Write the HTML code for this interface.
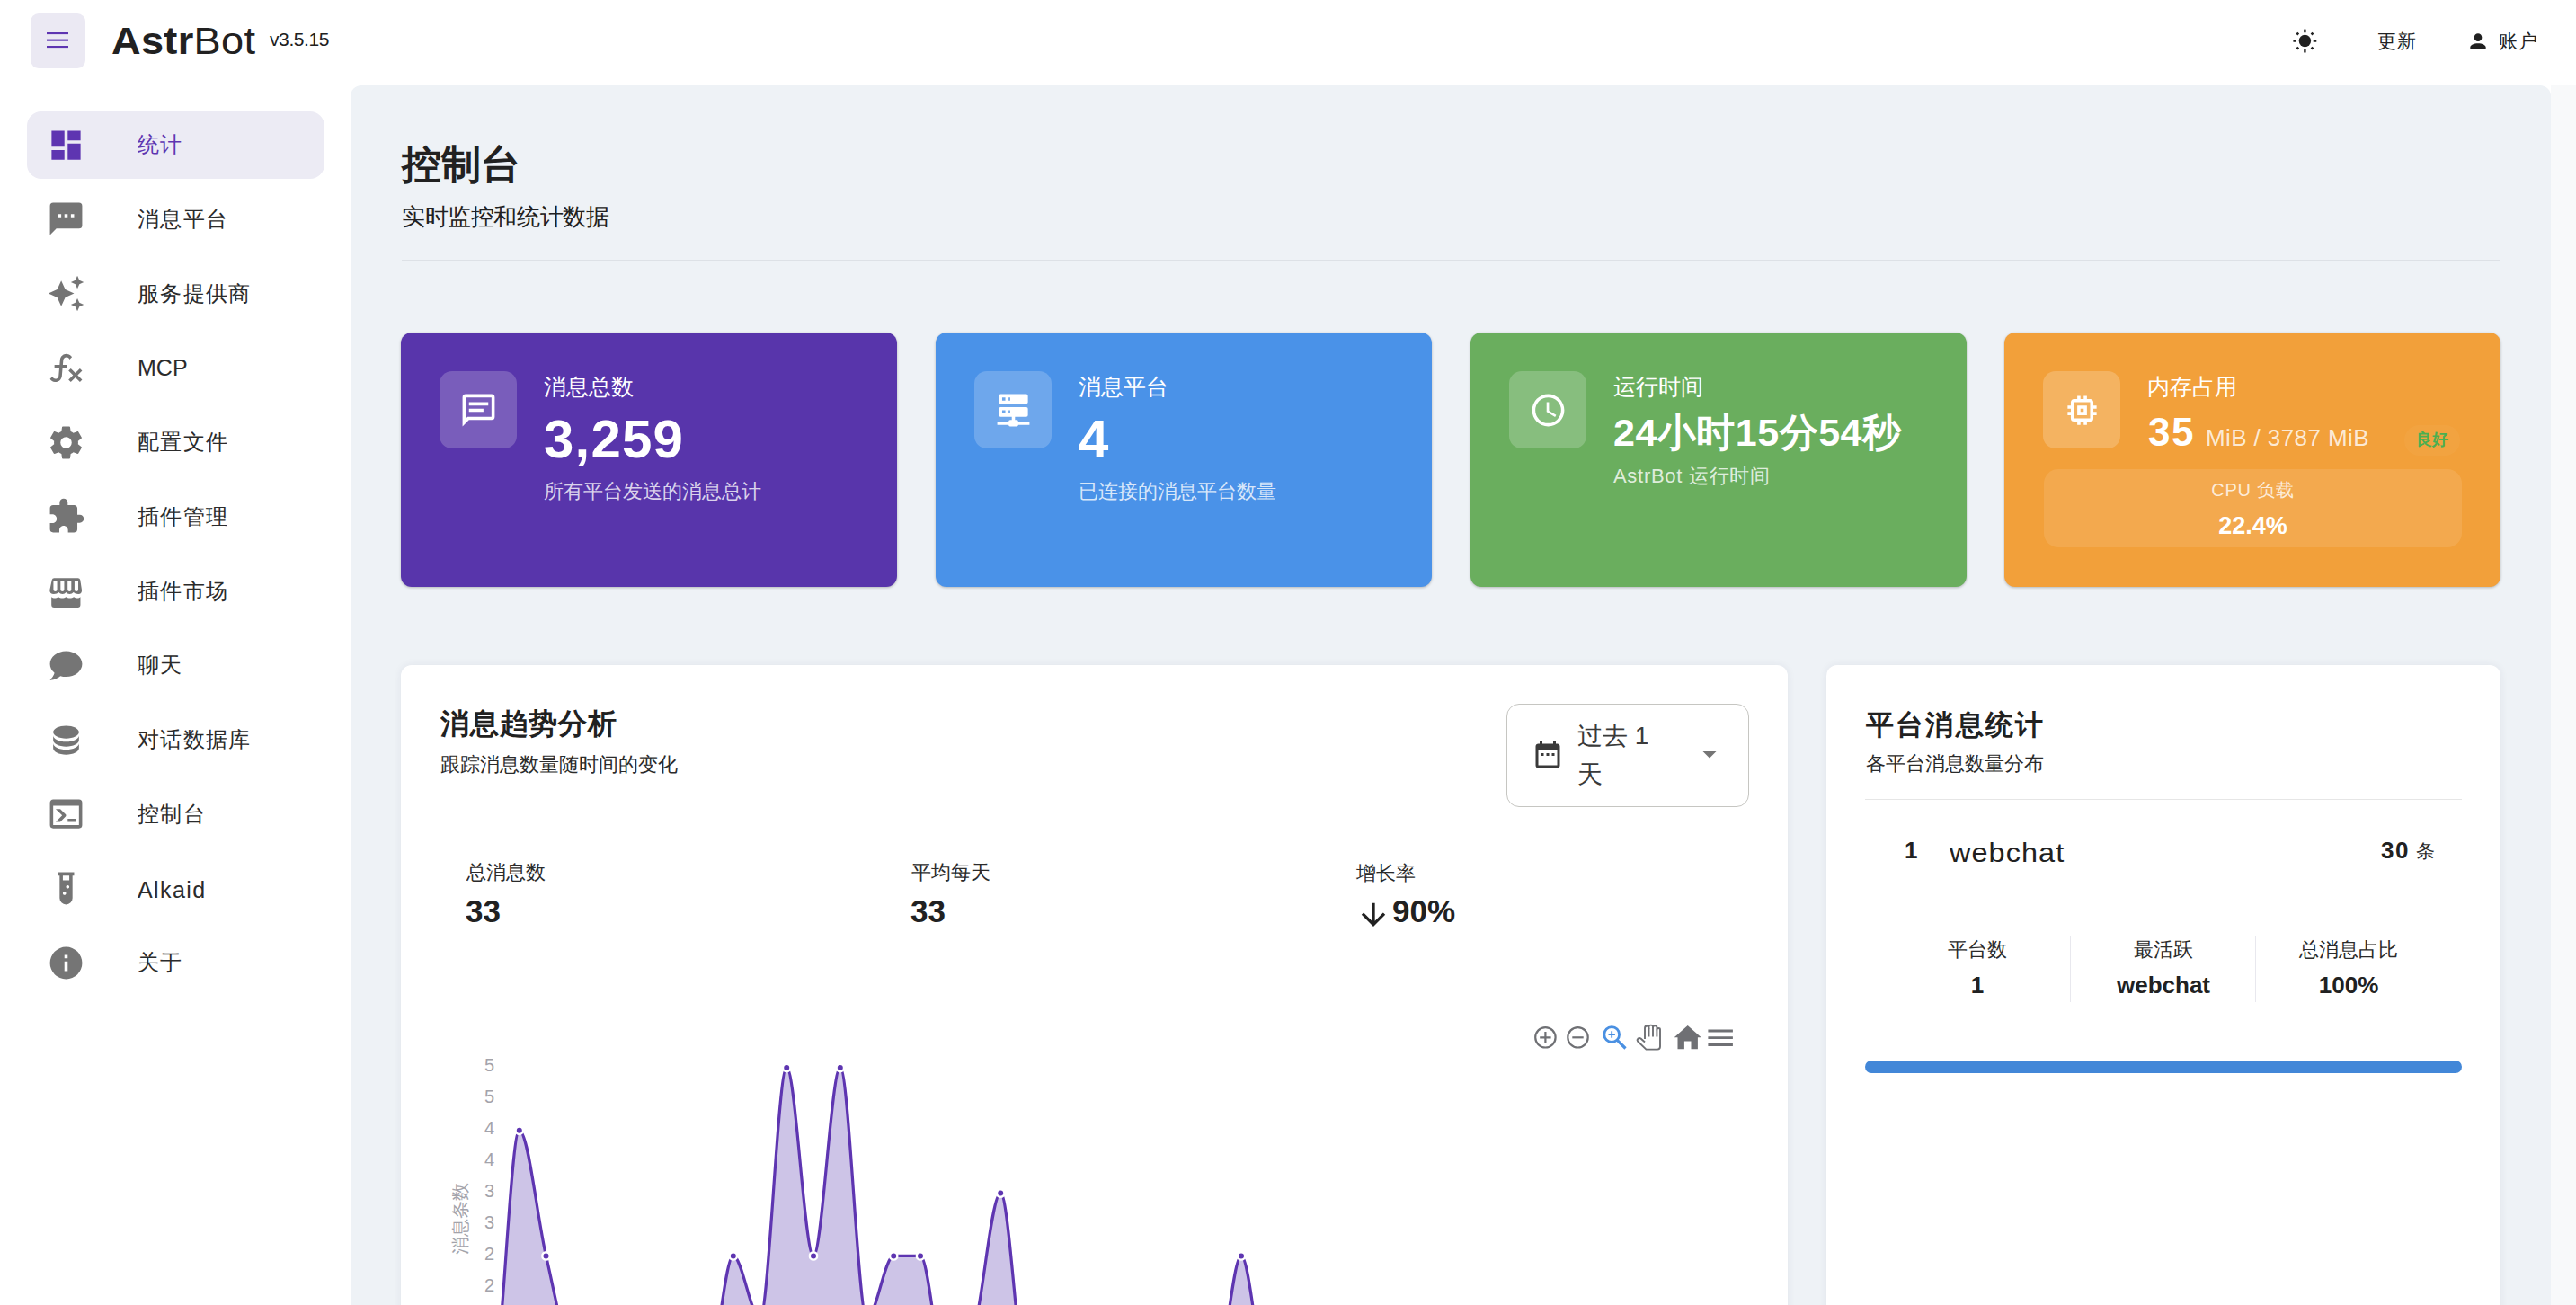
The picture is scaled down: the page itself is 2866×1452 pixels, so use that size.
<!DOCTYPE html>
<html><head><meta charset="utf-8">
<style>
*{margin:0;padding:0;box-sizing:border-box}
html,body{width:2866px;height:1452px;overflow:hidden;background:#fff;font-family:"Liberation Sans",sans-serif;color:#212121}
.a{position:absolute;white-space:nowrap;line-height:1}
svg{position:absolute;overflow:visible}
#hdr{position:absolute;left:0;top:0;width:2866px;height:95px;background:#fff}
#menubtn{position:absolute;left:34px;top:15px;width:61px;height:61px;border-radius:9px;background:#ebe9f3}
#main{position:absolute;left:390px;top:95px;width:2448px;height:1400px;background:#eef2f6;border-radius:12px 12px 0 0}
#strip{position:absolute;left:2838px;top:95px;width:28px;height:1357px;background:#f8f9fa}
.nav{position:absolute;left:30px;width:331px;height:75px;border-radius:16px}
.nav.act{background:#ecebf4}
.ni{position:absolute;left:52px;width:43px;height:43px}
.nt{position:absolute;left:123px;font-size:25px;color:#2b2b2b}
.card{position:absolute;top:370px;width:552px;height:283px;border-radius:12px;box-shadow:0 1px 3px rgba(0,0,0,.25)}
.ib{position:absolute;left:43px;top:43px;width:86px;height:86px;border-radius:14px;background:rgba(255,255,255,.2)}
.ct{position:absolute;left:159px;top:44px;font-size:25px;color:#fff;font-weight:500}
.panel{position:absolute;top:740px;height:800px;background:#fff;border-radius:12px;box-shadow:0 0 10px rgba(40,40,80,.07)}
</style></head><body>
<div id="hdr">
  <div id="menubtn"></div>
  <svg style="left:52px;top:36px" width="24" height="18" viewBox="0 0 24 18"><rect x="0" y="0" width="24" height="2.1" fill="#5e35b1"/><rect x="0" y="7.6" width="24" height="2.1" fill="#5e35b1"/><rect x="0" y="15" width="24" height="2.1" fill="#5e35b1"/></svg>
  <div class="a" style="left:124px;top:24px;font-size:43px;letter-spacing:.3px;transform:scaleX(1.05);transform-origin:0 0;color:#212121"><b>Astr</b>Bot</div>
  <div class="a" style="left:300px;top:33px;font-size:21px;letter-spacing:-.4px;color:#212121">v3.5.15</div>
  <svg style="left:2540px;top:20px" width="50" height="50" viewBox="0 0 50 50"><g fill="#212121"><circle cx="24.4" cy="25.5" r="6.7"/><rect x="23.2" y="12.6" width="2.4" height="3.6" rx=".5"/><rect x="23.2" y="34.9" width="2.4" height="3.6" rx=".5"/><rect x="11.4" y="24.3" width="3.6" height="2.4" rx=".5"/><rect x="33.7" y="24.3" width="3.6" height="2.4" rx=".5"/><rect x="15" y="16.3" width="2.6" height="2.6" transform="rotate(45 16.3 17.6)"/><rect x="31.2" y="16.3" width="2.6" height="2.6" transform="rotate(45 32.5 17.6)"/><rect x="15" y="32.3" width="2.6" height="2.6" transform="rotate(45 16.3 33.6)"/><rect x="31.2" y="32.3" width="2.6" height="2.6" transform="rotate(45 32.5 33.6)"/></g></svg>
  <div class="a" style="left:2645px;top:35px;font-size:21px;letter-spacing:.5px;color:#212121">更新</div>
  <svg style="left:2744px;top:33px" width="26" height="26" viewBox="0 0 24 24"><path fill="#212121" d="M12,4A4,4 0 0,1 16,8A4,4 0 0,1 12,12A4,4 0 0,1 8,8A4,4 0 0,1 12,4M12,14C16.42,14 20,15.79 20,18V20H4V18C4,15.79 7.58,14 12,14Z"/></svg>
  <div class="a" style="left:2780px;top:35px;font-size:21px;letter-spacing:.5px;color:#212121">账户</div>
</div>
<div id="side"><div class="nav act" style="top:123.5px"><svg style="left:22px;top:16px" width="43" height="43" viewBox="0 0 24 24"><path fill="#5e35b1" fill-rule="evenodd" d="M13,3V9H21V3M13,21H21V11H13M3,21H11V15H3M3,13H11V3H3V13Z"/></svg><div class="a" style="left:123px;top:25.5px;font-size:24px;letter-spacing:1.3px;color:#5e35b1">统计</div></div><div class="nav" style="top:206.2px"><svg style="left:22px;top:16px" width="43" height="43" viewBox="0 0 24 24"><path fill="#757575" fill-rule="evenodd" d="M20,2H4A2,2 0 0,0 2,4V22L6,18H20A2,2 0 0,0 22,16V4A2,2 0 0,0 20,2M17,11H15V9H17M13,11H11V9H13M9,11H7V9H9"/></svg><div class="a" style="left:123px;top:25.5px;font-size:24px;letter-spacing:1.3px;color:#2b2b2b">消息平台</div></div><div class="nav" style="top:289.0px"><svg style="left:22px;top:16px" width="43" height="43" viewBox="0 0 24 24"><path fill="#757575" fill-rule="evenodd" d="M19,1L17.74,3.75L15,5L17.74,6.26L19,9L20.25,6.26L23,5L20.25,3.75M9,4L6.5,9.5L1,12L6.5,14.5L9,20L11.5,14.5L17,12L11.5,9.5M19,15L17.74,17.74L15,19L17.74,20.25L19,23L20.25,20.25L23,19L20.25,17.74"/></svg><div class="a" style="left:123px;top:25.5px;font-size:24px;letter-spacing:1.3px;color:#2b2b2b">服务提供商</div></div><div class="nav" style="top:371.8px"><svg style="left:22px;top:16px" width="43" height="43" viewBox="0 0 24 24"><path fill="#757575" fill-rule="evenodd" d="M12.42,5.29C11.32,5.19 10.35,6 10.25,7.11L10,10H12.82V12H9.82L9.38,17.07C9.18,19.27 7.24,20.9 5.04,20.7C3.79,20.59 2.66,19.9 2,18.83L3.5,17.33C3.83,18.38 4.960,18.97 6,18.63C6.78,18.39 7.33,17.7 7.4,16.89L7.82,12H4.82V10H8L8.27,6.93C8.46,4.73 10.39,3.1 12.6,3.28C13.86,3.39 15,4.08 15.66,5.15L14.16,6.65C13.91,5.9 13.23,5.36 12.42,5.29M22,13.65L20.59,12.24L17.76,15.07L14.93,12.24L13.5,13.65L16.35,16.5L13.5,19.31L14.93,20.72L17.76,17.89L20.59,20.72L22,19.31L19.17,16.5L22,13.65Z"/></svg><div class="a" style="left:123px;top:25px;font-size:25px;color:#2b2b2b">MCP</div></div><div class="nav" style="top:454.5px"><svg style="left:22px;top:16px" width="43" height="43" viewBox="0 0 24 24"><path fill="#757575" fill-rule="evenodd" d="M12,15.5A3.5,3.5 0 0,1 8.5,12A3.5,3.5 0 0,1 12,8.5A3.5,3.5 0 0,1 15.5,12A3.5,3.5 0 0,1 12,15.5M19.43,12.97C19.47,12.65 19.5,12.33 19.5,12C19.5,11.67 19.47,11.34 19.43,11L21.54,9.37C21.73,9.22 21.78,8.95 21.66,8.73L19.66,5.27C19.54,5.05 19.27,4.96 19.05,5.05L16.56,6.05C16.04,5.66 15.5,5.32 14.87,5.07L14.5,2.42C14.46,2.180 14.25,2 14,2H10C9.75,2 9.54,2.18 9.5,2.42L9.13,5.07C8.5,5.32 7.96,5.66 7.44,6.05L4.95,5.05C4.73,4.96 4.46,5.05 4.34,5.27L2.34,8.73C2.21,8.95 2.27,9.22 2.46,9.37L4.57,11C4.53,11.34 4.5,11.67 4.5,12C4.5,12.33 4.53,12.65 4.57,12.97L2.46,14.63C2.27,14.78 2.21,15.05 2.34,15.27L4.34,18.73C4.46,18.95 4.73,19.03 4.95,18.95L7.44,17.94C7.96,18.34 8.5,18.68 9.13,18.93L9.5,21.58C9.54,21.82 9.75,22 10,22H14C14.25,22 14.46,21.82 14.5,21.58L14.87,18.93C15.5,18.67 16.04,18.34 16.56,17.94L19.05,18.95C19.27,19.03 19.54,18.95 19.66,18.73L21.66,15.27C21.78,15.05 21.73,14.78 21.54,14.63L19.43,12.97Z"/></svg><div class="a" style="left:123px;top:25.5px;font-size:24px;letter-spacing:1.3px;color:#2b2b2b">配置文件</div></div><div class="nav" style="top:537.2px"><svg style="left:22px;top:16px" width="43" height="43" viewBox="0 0 24 24"><path fill="#757575" fill-rule="evenodd" d="M20.5,11H19V7C19,5.89 18.1,5 17,5H13V3.5A2.5,2.5 0 0,0 10.5,1A2.5,2.5 0 0,0 8,3.5V5H4A2,2 0 0,0 2,7V10.8H3.5C5,10.8 6.2,12 6.2,13.5C6.2,15 5,16.2 3.5,16.2H2V20A2,2 0 0,0 4,22H7.8V20.5C7.8,19 9,17.8 10.5,17.8C12,17.8 13.2,19 13.2,20.5V22H17A2,2 0 0,0 19,20V16H20.5A2.5,2.5 0 0,0 23,13.5A2.5,2.5 0 0,0 20.5,11Z"/></svg><div class="a" style="left:123px;top:25.5px;font-size:24px;letter-spacing:1.3px;color:#2b2b2b">插件管理</div></div><div class="nav" style="top:620.0px"><svg style="left:22px;top:16px" width="43" height="43" viewBox="0 0 24 24"><path fill="#757575" fill-rule="evenodd" d="M4.6,4.1H19.4Q20.5,4.1 20.8,5.1L21.8,11.6Q21.8,13.95 19.6,13.95Q17.6,13.95 16.6,12.9Q15.7,13.95 14.2,13.95Q12.8,13.95 12,12.9Q11.2,13.95 9.8,13.95Q8.3,13.95 7.4,12.9Q6.4,13.95 4.4,13.95Q1.84,13.95 1.84,11.6L3.2,5.1Q3.5,4.1 4.6,4.1ZM4.15,6.1H6.45V11.1A1.15,1.15 0 0 1 4.15,11.1ZM8.55,6.1H10.85V11.1A1.15,1.15 0 0 1 8.55,11.1ZM12.95,6.1H15.25V11.1A1.15,1.15 0 0 1 12.95,11.1ZM17.25,6.1H19.55V11.1A1.15,1.15 0 0 1 17.25,11.1ZM2.9,15.7C3.9,16.7 5.9,16.7 7.2,15.7C8.5,16.7 10.7,16.7 12,15.7C13.3,16.7 15.5,16.7 16.8,15.7C18.1,16.7 20,16.7 20.9,15.7V20.6Q20.9,22.3 19.2,22.3H4.6Q2.9,22.3 2.9,20.6Z"/></svg><div class="a" style="left:123px;top:25.5px;font-size:24px;letter-spacing:1.3px;color:#2b2b2b">插件市场</div></div><div class="nav" style="top:702.8px"><svg style="left:22px;top:16px" width="43" height="43" viewBox="0 0 24 24"><path fill="#757575" fill-rule="evenodd" d="M12,3C17.5,3 22,6.58 22,11C22,15.42 17.5,19 12,19C10.76,19 9.57,18.82 8.47,18.5C5.55,21 2,21 2,21C4.33,18.67 4.7,17.1 4.75,16.5C3.05,15.07 2,13.13 2,11C2,6.58 6.5,3 12,3Z"/></svg><div class="a" style="left:123px;top:25.5px;font-size:24px;letter-spacing:1.3px;color:#2b2b2b">聊天</div></div><div class="nav" style="top:785.5px"><svg style="left:22px;top:16px" width="43" height="43" viewBox="0 0 24 24"><path fill="#757575" fill-rule="evenodd" d="M12,3C7.58,3 4,4.79 4,7C4,9.21 7.58,11 12,11C16.42,11 20,9.21 20,7C20,4.79 16.42,3 12,3M4,9V12C4,14.21 7.58,16 12,16C16.42,16 20,14.21 20,12V9C20,11.21 16.42,13 12,13C7.58,13 4,11.21 4,9M4,14V17C4,19.21 7.58,21 12,21C16.42,21 20,19.21 20,17V14C20,16.21 16.42,18 12,18C7.58,18 4,16.21 4,14Z"/></svg><div class="a" style="left:123px;top:25.5px;font-size:24px;letter-spacing:1.3px;color:#2b2b2b">对话数据库</div></div><div class="nav" style="top:868.2px"><svg style="left:22px;top:16px" width="43" height="43" viewBox="0 0 24 24"><path fill="#757575" fill-rule="evenodd" d="M20,19V7H4V19H20M20,3A2,2 0 0,1 22,5V19A2,2 0 0,1 20,21H4A2,2 0 0,1 2,19V5C2,3.89 2.9,3 4,3H20M13,17V15H18V17H13M9.58,13L5.57,9H8.4L11.7,12.3C12.09,12.69 12.09,13.33 11.7,13.72L8.42,17H5.59L9.58,13Z"/></svg><div class="a" style="left:123px;top:25.5px;font-size:24px;letter-spacing:1.3px;color:#2b2b2b">控制台</div></div><div class="nav" style="top:951.0px"><svg style="left:22px;top:16px" width="43" height="43" viewBox="0 0 24 24"><path fill="#757575" fill-rule="evenodd" d="M7,2V4H8V18A4,4 0 0,0 12,22A4,4 0 0,0 16,18V4H17V2H7M11,16C10.4,16 10,15.6 10,15C10,14.4 10.4,14 11,14C11.6,14 12,14.4 12,15C12,15.6 11.6,16 11,16M13,12C12.4,12 12,11.6 12,11C12,10.4 12.4,10 13,10C13.6,10 14,10.4 14,11C14,11.6 13.6,12 13,12M14,7H10V4H14V7Z"/></svg><div class="a" style="left:123px;top:27px;font-size:25px;letter-spacing:1.4px;color:#2b2b2b">Alkaid</div></div><div class="nav" style="top:1033.8px"><svg style="left:22px;top:16px" width="43" height="43" viewBox="0 0 24 24"><path fill="#757575" fill-rule="evenodd" d="M13,9H11V7H13M13,17H11V11H13M12,2A10,10 0 0,0 2,12A10,10 0 0,0 12,22A10,10 0 0,0 22,12A10,10 0 0,0 12,2Z"/></svg><div class="a" style="left:123px;top:25.5px;font-size:24px;letter-spacing:1.3px;color:#2b2b2b">关于</div></div></div>
<div id="main"></div>
<div id="strip"></div>
<div class="a" style="left:447px;top:161px;font-size:44px;font-weight:bold;color:#212121">控制台</div>
<div class="a" style="left:447px;top:229px;font-size:25.6px;letter-spacing:-.4px;color:#212121">实时监控和统计数据</div>
<div style="position:absolute;left:447px;top:289px;width:2335px;height:1px;background:#dde1e6"></div>

<div class="card" style="left:446px;background:#5835ab">
  <div class="ib"></div>
  <svg style="left:65px;top:65px" width="43" height="43" viewBox="0 0 24 24"><path fill="#fff" d="M20,2H4A2,2 0 0,0 2,4V22L6,18H20A2,2 0 0,0 22,16V4A2,2 0 0,0 20,2M20,16H5.17L4,17.17V4H20V16M6,7H18V9H6V7M6,11H15V13H6V11Z"/></svg>
  <div class="ct">消息总数</div>
  <div class="a" style="left:159px;top:89px;font-size:60px;letter-spacing:1.2px;font-weight:bold;color:#fff">3,259</div>
  <div class="a" style="left:159px;top:166px;font-size:22px;color:rgba(255,255,255,.8)">所有平台发送的消息总计</div>
</div>
<div class="card" style="left:1041px;background:#4a92e8">
  <div class="ib"></div>
  <svg style="left:65px;top:65px" width="43" height="43" viewBox="0 0 24 24"><path fill="#fff" d="M13,18H14A1,1 0 0,1 15,19H22V21H15A1,1 0 0,1 14,22H10A1,1 0 0,1 9,21H2V19H9A1,1 0 0,1 10,18H11V16H4A1,1 0 0,1 3,15V11A1,1 0 0,1 4,10H20A1,1 0 0,1 21,11V15A1,1 0 0,1 20,16H13V18M4,2H20A1,1 0 0,1 21,3V7A1,1 0 0,1 20,8H4A1,1 0 0,1 3,7V3A1,1 0 0,1 4,2M9,6H10V4H9V6M9,14H10V12H9V14M5,4V6H7V4H5M5,12V14H7V12H5Z"/></svg>
  <div class="ct">消息平台</div>
  <div class="a" style="left:159px;top:89px;font-size:60px;font-weight:bold;color:#fff">4</div>
  <div class="a" style="left:159px;top:166px;font-size:22px;color:rgba(255,255,255,.8)">已连接的消息平台数量</div>
</div>
<div class="card" style="left:1636px;background:#6aae5e">
  <div class="ib"></div>
  <svg style="left:65px;top:65px" width="43" height="43" viewBox="0 0 24 24"><path fill="#fff" d="M12,20A8,8 0 0,0 20,12A8,8 0 0,0 12,4A8,8 0 0,0 4,12A8,8 0 0,0 12,20M12,2A10,10 0 0,1 22,12A10,10 0 0,1 12,22C6.47,22 2,17.5 2,12A10,10 0 0,1 12,2M12.5,7V12.25L17,14.92L16.25,16.15L11,13V7H12.5Z"/></svg>
  <div class="ct">运行时间</div>
  <div class="a" style="left:159px;top:90px;font-size:43px;letter-spacing:.5px;font-weight:bold;color:#fff">24小时15分54秒</div>
  <div class="a" style="left:159px;top:149px;font-size:22px;letter-spacing:.7px;color:rgba(255,255,255,.8)">AstrBot 运行时间</div>
</div>
<div class="card" style="left:2230px;background:#f2a03a">
  <div class="ib"></div>
  <svg style="left:65px;top:65px" width="43" height="43" viewBox="0 0 24 24"><path fill="#fff" d="M17,17H7V7H17M21,11V9H19V7C19,5.89 18.1,5 17,5H15V3H13V5H11V3H9V5H7C5.89,5 5,5.89 5,7V9H3V11H5V13H3V15H5V17A2,2 0 0,0 7,19H9V21H11V19H13V21H15V19H17A2,2 0 0,0 19,17V15H21V13H19V11M13,13H11V11H13M15,9H9V15H15V9Z"/></svg>
  <div class="ct">内存占用</div>
  <div class="a" style="left:160px;top:89px;font-size:44px;letter-spacing:1.5px;font-weight:bold;color:#fff">35</div>
  <div class="a" style="left:224px;top:104px;font-size:26px;letter-spacing:.4px;color:rgba(255,255,255,.8)">MiB / 3787 MiB</div>
  <div style="position:absolute;left:445px;top:103px;width:62px;height:34px;border-radius:17px;background:rgba(255,255,255,.035)"></div><div class="a" style="left:458px;top:111px;font-size:17.5px;font-weight:bold;color:#4caf50">良好</div>
  <div style="position:absolute;left:44px;top:152px;width:465px;height:87px;border-radius:16px;background:rgba(255,255,255,.1)"></div>
  <div class="a" style="left:44px;width:465px;text-align:center;top:165px;font-size:20px;letter-spacing:.8px;color:rgba(255,255,255,.8)">CPU 负载</div>
  <div class="a" style="left:44px;width:465px;text-align:center;top:202px;font-size:27px;font-weight:bold;color:#fff">22.4%</div>
</div>

<div class="panel" style="left:446px;width:1543px"></div>
<div class="a" style="left:490px;top:789px;font-size:32px;letter-spacing:.8px;font-weight:bold;color:#212121">消息趋势分析</div>
<div class="a" style="left:490px;top:840px;font-size:22.2px;color:#2b2b2b">跟踪消息数量随时间的变化</div>
<div style="position:absolute;left:1676px;top:783px;width:270px;height:115px;border:1.5px solid #c6c6c2;border-radius:14px"></div>
<svg style="left:1704px;top:823px" width="36" height="36" viewBox="0 0 24 24"><path fill="#3a3a3a" d="M19,19H5V8H19M16,1V3H8V1H6V3H5C3.89,3 3,3.89 3,5V19A2,2 0 0,0 5,21H19A2,2 0 0,0 21,19V5C21,3.89 20.1,3 19,3H18V1M7,10H9V12H7M11,10H13V12H11M15,10H17V12H15Z"/></svg>
<div class="a" style="left:1755px;top:805px;font-size:28px;color:#3a3a3a">过去 1</div>
<div class="a" style="left:1755px;top:848px;font-size:28px;color:#3a3a3a">天</div>
<svg style="left:1884px;top:821px" width="36" height="36" viewBox="0 0 24 24"><path fill="#757575" d="M7,10L12,15L17,10H7Z"/></svg>

<div class="a" style="left:519px;top:960px;font-size:22px;color:#2b2b2b">总消息数</div>
<div class="a" style="left:518px;top:996px;font-size:35px;font-weight:bold;color:#212121">33</div>
<div class="a" style="left:1014px;top:960px;font-size:22px;color:#2b2b2b">平均每天</div>
<div class="a" style="left:1013px;top:996px;font-size:35px;font-weight:bold;color:#212121">33</div>
<div class="a" style="left:1509px;top:961px;font-size:22px;color:#2b2b2b">增长率</div>
<svg style="left:1508px;top:998px" width="40" height="40" viewBox="0 0 24 24"><path fill="#212121" d="M11,4H13V16L18.5,10.5L19.92,11.92L12,19.84L4.08,11.92L5.5,10.5L11,16V4Z"/></svg>
<div class="a" style="left:1549px;top:996px;font-size:35px;font-weight:bold;color:#212121">90%</div>

<svg style="left:0;top:0" width="2866" height="1452" viewBox="0 0 2866 1452">
 <g fill="none" stroke="#6f7074" stroke-width="2.2">
  <circle cx="1719.4" cy="1154.3" r="11.2"/><path d="M1713.2 1154.3h12.4M1719.4 1148.1v12.4"/>
  <circle cx="1755.5" cy="1154.3" r="11.2"/><path d="M1749.3 1154.3h12.4"/>
 </g>
 <g fill="none" stroke="#4a90e2" stroke-width="2.8"><circle cx="1793.2" cy="1151" r="8.4"/><path d="M1799.3 1157.3l9.2 9.2" stroke-width="3.2"/><path d="M1789.5 1151h7.4M1793.2 1147.3v7.4" stroke-width="1.8"/></g>
 <g transform="translate(1700 1135)" fill="#fff" stroke="#6f7074" stroke-width="1.9" stroke-linejoin="round">
  <path d="M130,21 L130,9 Q130,6.5 132.3,6.5 Q134.5,6.5 134.5,9 L134.5,7.5 Q134.5,5.6 136.8,5.6 Q139,5.6 139,7.5 L139,8 Q139,6.2 141.2,6.2 Q143.4,6.2 143.4,8 L143.4,10.5 Q143.4,9 145.2,9 Q147,9 147,10.5 L147,29.5 Q147,32.6 144,32.6 L131.5,32.6 L122,23.5 Q121,22 122.5,20.5 Q124,19.5 125.5,20.5 L130,24.5"/>
  <path d="M134.5,9V18.5M139,8V18.5M143.4,10.5V18.5" fill="none"/>
 </g>
 <path fill="#6f7074" d="M1877.7 1141l15 13.2h-3.8v13h-7.4v-8.6h-7.6v8.6h-7.4v-13h-3.8z"/>
 <g stroke="#6f7074" stroke-width="2.8"><path d="M1900.4 1147h27.5M1900.4 1154.6h27.5M1900.4 1162.5h27.5"/></g>
 <g font-family="Liberation Sans, sans-serif" font-size="20" fill="#a3a3ab">
  <text x="539" y="1192">5</text><text x="539" y="1227">5</text><text x="539" y="1262">4</text><text x="539" y="1297">4</text>
  <text x="539" y="1332">3</text><text x="539" y="1367">3</text><text x="539" y="1402">2</text><text x="539" y="1437">2</text>
 </g>
 <text transform="translate(519 1356) rotate(-90)" text-anchor="middle" font-size="20" fill="#a3a3ab">消息条数</text>
 <clipPath id="cp"><rect x="552" y="1100" width="1420" height="400"/></clipPath>
 <g clip-path="url(#cp)">
  <path d="M548.0,1537.0 C557.9,1537.0 567.8,1257.8 577.8,1257.8 C587.7,1257.8 597.6,1354.9 607.5,1397.4 C617.4,1439.9 627.3,1496.3 637.2,1512.6 C647.2,1528.9 657.1,1537.0 667.0,1537.0 C676.9,1537.0 686.8,1537.0 696.8,1537.0 C706.7,1537.0 716.6,1537.0 726.5,1537.0 C736.4,1537.0 746.3,1537.0 756.2,1537.0 C766.2,1537.0 776.1,1537.0 786.0,1537.0 C795.9,1537.0 805.8,1397.4 815.8,1397.4 C825.7,1397.4 835.6,1467.2 845.5,1467.2 C855.4,1467.2 865.3,1188.0 875.2,1188.0 C885.2,1188.0 895.1,1397.4 905.0,1397.4 C914.9,1397.4 924.8,1188.0 934.8,1188.0 C944.7,1188.0 954.6,1467.2 964.5,1467.2 C974.4,1467.2 984.3,1397.4 994.2,1397.4 C1004.2,1397.4 1014.1,1397.4 1024.0,1397.4 C1033.9,1397.4 1043.8,1537.0 1053.8,1537.0 C1063.7,1537.0 1073.6,1516.1 1083.5,1481.2 C1093.4,1446.3 1103.3,1327.6 1113.2,1327.6 C1123.2,1327.6 1133.1,1537.0 1143.0,1537.0 C1152.9,1537.0 1162.8,1537.0 1172.8,1537.0 C1182.7,1537.0 1192.6,1537.0 1202.5,1537.0 C1212.4,1537.0 1222.3,1537.0 1232.2,1537.0 C1242.2,1537.0 1252.1,1537.0 1262.0,1537.0 C1271.9,1537.0 1281.8,1537.0 1291.8,1537.0 C1301.7,1537.0 1311.6,1537.0 1321.5,1537.0 C1331.4,1537.0 1341.3,1537.0 1351.2,1537.0 C1361.2,1537.0 1371.1,1397.4 1381.0,1397.4 C1390.9,1397.4 1400.8,1537.0 1410.8,1537.0 C1420.7,1537.0 1430.6,1537.0 1440.5,1537.0 C1450.4,1537.0 1460.3,1537.0 1470.2,1537.0 C1480.2,1537.0 1490.1,1537.0 1500.0,1537.0 C1509.9,1537.0 1519.8,1537.0 1529.8,1537.0 C1539.7,1537.0 1549.6,1537.0 1559.5,1537.0 C1569.4,1537.0 1579.3,1537.0 1589.2,1537.0 C1599.2,1537.0 1609.1,1537.0 1619.0,1537.0 C1628.9,1537.0 1638.8,1537.0 1648.8,1537.0 C1658.7,1537.0 1668.6,1537.0 1678.5,1537.0 C1688.4,1537.0 1698.3,1537.0 1708.2,1537.0 C1718.2,1537.0 1728.1,1537.0 1738.0,1537.0 C1747.9,1537.0 1757.8,1537.0 1767.8,1537.0 C1777.7,1537.0 1787.6,1537.0 1797.5,1537.0 C1807.4,1537.0 1817.3,1537.0 1827.2,1537.0 C1837.2,1537.0 1847.1,1537.0 1857.0,1537.0 C1866.9,1537.0 1876.8,1537.0 1886.8,1537.0 C1896.7,1537.0 1906.6,1537.0 1916.5,1537.0 C1926.4,1537.0 1936.3,1537.0 1946.2,1537.0 C1956.2,1537.0 1966.1,1537.0 1976.0,1537.0 C1985.9,1537.0 1995.8,1537.0 2005.8,1537.0 L2005.8,1600 L548.0,1600 Z" fill="#cdc4e7"/>
  <path d="M548.0,1537.0 C557.9,1537.0 567.8,1257.8 577.8,1257.8 C587.7,1257.8 597.6,1354.9 607.5,1397.4 C617.4,1439.9 627.3,1496.3 637.2,1512.6 C647.2,1528.9 657.1,1537.0 667.0,1537.0 C676.9,1537.0 686.8,1537.0 696.8,1537.0 C706.7,1537.0 716.6,1537.0 726.5,1537.0 C736.4,1537.0 746.3,1537.0 756.2,1537.0 C766.2,1537.0 776.1,1537.0 786.0,1537.0 C795.9,1537.0 805.8,1397.4 815.8,1397.4 C825.7,1397.4 835.6,1467.2 845.5,1467.2 C855.4,1467.2 865.3,1188.0 875.2,1188.0 C885.2,1188.0 895.1,1397.4 905.0,1397.4 C914.9,1397.4 924.8,1188.0 934.8,1188.0 C944.7,1188.0 954.6,1467.2 964.5,1467.2 C974.4,1467.2 984.3,1397.4 994.2,1397.4 C1004.2,1397.4 1014.1,1397.4 1024.0,1397.4 C1033.9,1397.4 1043.8,1537.0 1053.8,1537.0 C1063.7,1537.0 1073.6,1516.1 1083.5,1481.2 C1093.4,1446.3 1103.3,1327.6 1113.2,1327.6 C1123.2,1327.6 1133.1,1537.0 1143.0,1537.0 C1152.9,1537.0 1162.8,1537.0 1172.8,1537.0 C1182.7,1537.0 1192.6,1537.0 1202.5,1537.0 C1212.4,1537.0 1222.3,1537.0 1232.2,1537.0 C1242.2,1537.0 1252.1,1537.0 1262.0,1537.0 C1271.9,1537.0 1281.8,1537.0 1291.8,1537.0 C1301.7,1537.0 1311.6,1537.0 1321.5,1537.0 C1331.4,1537.0 1341.3,1537.0 1351.2,1537.0 C1361.2,1537.0 1371.1,1397.4 1381.0,1397.4 C1390.9,1397.4 1400.8,1537.0 1410.8,1537.0 C1420.7,1537.0 1430.6,1537.0 1440.5,1537.0 C1450.4,1537.0 1460.3,1537.0 1470.2,1537.0 C1480.2,1537.0 1490.1,1537.0 1500.0,1537.0 C1509.9,1537.0 1519.8,1537.0 1529.8,1537.0 C1539.7,1537.0 1549.6,1537.0 1559.5,1537.0 C1569.4,1537.0 1579.3,1537.0 1589.2,1537.0 C1599.2,1537.0 1609.1,1537.0 1619.0,1537.0 C1628.9,1537.0 1638.8,1537.0 1648.8,1537.0 C1658.7,1537.0 1668.6,1537.0 1678.5,1537.0 C1688.4,1537.0 1698.3,1537.0 1708.2,1537.0 C1718.2,1537.0 1728.1,1537.0 1738.0,1537.0 C1747.9,1537.0 1757.8,1537.0 1767.8,1537.0 C1777.7,1537.0 1787.6,1537.0 1797.5,1537.0 C1807.4,1537.0 1817.3,1537.0 1827.2,1537.0 C1837.2,1537.0 1847.1,1537.0 1857.0,1537.0 C1866.9,1537.0 1876.8,1537.0 1886.8,1537.0 C1896.7,1537.0 1906.6,1537.0 1916.5,1537.0 C1926.4,1537.0 1936.3,1537.0 1946.2,1537.0 C1956.2,1537.0 1966.1,1537.0 1976.0,1537.0 C1985.9,1537.0 1995.8,1537.0 2005.8,1537.0" fill="none" stroke="#5e35b1" stroke-width="3.2"/>
 </g>
 <g fill="#5e35b1" stroke="#fff" stroke-width="2.4"><circle cx="577.8" cy="1257.8" r="4.2"/><circle cx="607.5" cy="1397.4" r="4.2"/><circle cx="815.8" cy="1397.4" r="4.2"/><circle cx="875.2" cy="1188.0" r="4.2"/><circle cx="905.0" cy="1397.4" r="4.2"/><circle cx="934.8" cy="1188.0" r="4.2"/><circle cx="994.2" cy="1397.4" r="4.2"/><circle cx="1024.0" cy="1397.4" r="4.2"/><circle cx="1113.2" cy="1327.6" r="4.2"/><circle cx="1381.0" cy="1397.4" r="4.2"/></g>
</svg>

<div class="panel" style="left:2032px;width:750px"></div>
<div class="a" style="left:2076px;top:791px;font-size:31px;letter-spacing:2.2px;font-weight:bold;color:#212121">平台消息统计</div>
<div class="a" style="left:2076px;top:839px;font-size:22px;color:#2b2b2b">各平台消息数量分布</div>
<div style="position:absolute;left:2075px;top:889px;width:664px;height:1px;background:#e6e6e6"></div>
<div class="a" style="left:2119px;top:933px;font-size:26px;font-weight:bold;color:#212121">1</div>
<div class="a" style="left:2169px;top:934px;font-size:30px;letter-spacing:1px;transform:scaleX(1.08);transform-origin:0 0;color:#212121">webchat</div>
<div class="a" style="left:2649px;top:933px;font-size:26px;letter-spacing:1.5px;font-weight:bold;color:#212121">30</div>
<div class="a" style="left:2688px;top:936px;font-size:21px;color:#2b2b2b">条</div>
<div class="a" style="left:2097px;width:206px;text-align:center;top:1046px;font-size:22px;color:#2b2b2b">平台数</div>
<div class="a" style="left:2097px;width:206px;text-align:center;top:1083px;font-size:26px;font-weight:bold;color:#212121">1</div>
<div style="position:absolute;left:2303px;top:1041px;width:1px;height:74px;background:#e8e8ee"></div>
<div class="a" style="left:2304px;width:206px;text-align:center;top:1046px;font-size:22px;color:#2b2b2b">最活跃</div>
<div class="a" style="left:2304px;width:206px;text-align:center;top:1083px;font-size:26px;font-weight:bold;color:#212121">webchat</div>
<div style="position:absolute;left:2509px;top:1041px;width:1px;height:74px;background:#e8e8ee"></div>
<div class="a" style="left:2510px;width:206px;text-align:center;top:1046px;font-size:22px;color:#2b2b2b">总消息占比</div>
<div class="a" style="left:2510px;width:206px;text-align:center;top:1083px;font-size:26px;font-weight:bold;color:#212121">100%</div>
<div style="position:absolute;left:2075px;top:1180px;width:664px;height:14px;border-radius:7px;background:#4287d8"></div>
</body></html>
